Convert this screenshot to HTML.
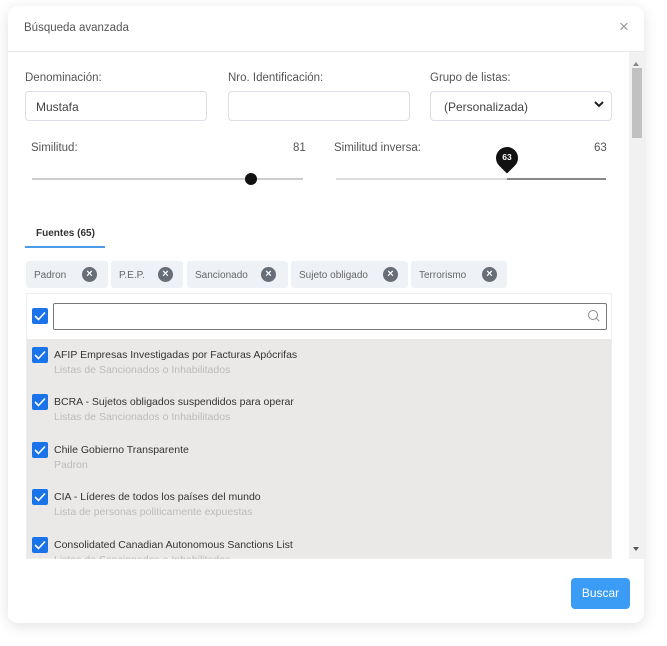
<!DOCTYPE html>
<html><head><meta charset="utf-8"><style>
*{box-sizing:border-box;margin:0;padding:0}
body{width:667px;height:646px;background:#fff;font-family:"Liberation Sans",sans-serif;position:relative;overflow:hidden}
.a{position:absolute}
.modal{left:8px;top:6px;width:636px;height:617px;background:#fff;border-radius:10px;box-shadow:0 3px 14px rgba(0,0,0,.12);overflow:hidden}
.lbl{font-size:11.5px;color:#555}
.inp{border:1px solid #dcdfe6;border-radius:4px;height:30px;background:#fff;font-size:12px;color:#444;padding:8px 10px}
.chip{top:261px;height:27px;background:#eef1f5;border-radius:3px;font-size:10px;color:#666;padding:9px 8px}
.x{position:absolute;top:6px;width:15px;height:15px;border-radius:50%;background:#666e78;color:#fff;font-size:11px;line-height:15px;text-align:center;font-weight:bold}
.cb{width:16px;height:16px;background:#1a73e8;border-radius:2px}
.cb svg{display:block}
.t{font-size:10.5px;color:#333}
.s{font-size:10.5px;color:#bbb}
</style></head><body>
<div class="a modal">
 <div class="a" style="left:16px;top:16px;font-size:11.5px;color:#555">Búsqueda avanzada</div>
 <div class="a" style="left:611px;top:11px;font-size:17px;color:#999">×</div>
 <div class="a" style="left:0;top:45px;width:636px;height:1px;background:#e8e8e8"></div>
 <div class="a" style="left:621px;top:46px;width:15px;height:507px;background:#f1f1f1"></div>
 <div class="a" style="left:624px;top:62px;width:10px;height:70px;background:#c1c1c1"></div>
 <div class="a" style="left:625px;top:56px;width:0;height:0;border:3px solid transparent;border-bottom:4px solid #888;border-top:0"></div>
 <div class="a" style="left:625px;top:541px;width:0;height:0;border:3px solid transparent;border-top:4px solid #555;border-bottom:0"></div>
</div>
<div class="a lbl" style="left:25px;top:72px">Denominación:</div>
<div class="a lbl" style="left:228px;top:72px">Nro. Identificación:</div>
<div class="a lbl" style="left:430px;top:72px">Grupo de listas:</div>
<div class="a inp" style="left:25px;top:91px;width:182px">Mustafa</div>
<div class="a inp" style="left:228px;top:91px;width:182px"></div>
<div class="a inp" style="left:430px;top:91px;width:182px;padding-left:13px">(Personalizada)<span style="position:absolute;right:6px;top:6px"><svg width="12" height="12" viewBox="0 0 12 12"><path d="M2 4l4 4 4-4" stroke="#222" stroke-width="2" fill="none"/></svg></span></div>
<div class="a lbl" style="left:31px;top:142px">Similitud:</div>
<div class="a lbl" style="left:293px;top:142px">81</div>
<div class="a lbl" style="left:334px;top:142px">Similitud inversa:</div>
<div class="a lbl" style="left:594px;top:142px">63</div>
<div class="a" style="left:32px;top:178px;width:271px;height:2px;background:#ccc"></div>
<div class="a" style="left:245px;top:173px;width:12px;height:12px;border-radius:50%;background:#111"></div>
<div class="a" style="left:336px;top:178px;width:270px;height:2px;background:#ddd"></div>
<div class="a" style="left:507px;top:178px;width:99px;height:2px;background:#888"></div>
<div class="a" style="left:496px;top:147px;width:22px;height:22px;border-radius:50% 50% 50% 0;transform:rotate(-45deg);background:#111"></div>
<div class="a" style="left:496px;top:152px;width:22px;text-align:center;color:#fff;font-size:8.5px;font-weight:bold">63</div>
<div class="a" style="left:36px;top:228px;font-size:10px;color:#333;font-weight:bold">Fuentes (65)</div>
<div class="a" style="left:25px;top:246px;width:80px;height:2px;background:#4a9be8"></div>
<div class="a chip" style="left:26px;width:82px">Padron<span class="x" style="left:56px">×</span></div>
<div class="a chip" style="left:111px;width:72px">P.E.P.<span class="x" style="left:47px">×</span></div>
<div class="a chip" style="left:187px;width:101px">Sancionado<span class="x" style="left:74px">×</span></div>
<div class="a chip" style="left:291px;width:117px">Sujeto obligado<span class="x" style="left:92px">×</span></div>
<div class="a chip" style="left:411px;width:96px">Terrorismo<span class="x" style="left:71px">×</span></div>
<div class="a" style="left:26px;top:293px;width:586px;height:266px;border:1px solid #eee;background:#ebe9e8;overflow:hidden">
 <div class="a" style="left:0;top:0;width:586px;height:45px;background:#fff"></div>
 <div class="a cb" style="left:5px;top:14px"><svg width="16" height="16"><path d="M3 8l3.5 3.5L13 4.5" stroke="#fff" stroke-width="1.6" fill="none"/></svg></div>
 <div class="a" style="left:26px;top:9px;width:554px;height:27px;border:1.5px solid #777;border-radius:2px;background:#fff"><svg class="a" style="right:5px;top:5px" width="14" height="14"><circle cx="6" cy="6" r="4.5" stroke="#888" fill="none"/><path d="M9.3 9.3l3 3" stroke="#888"/></svg></div>
</div>
<div class="a cb" style="left:32px;top:347px"><svg width="16" height="16"><path d="M3 8l3.5 3.5L13 4.5" stroke="#fff" stroke-width="1.6" fill="none"/></svg></div>
<div class="a t" style="left:54px;top:349px">AFIP Empresas Investigadas por Facturas Apócrifas</div>
<div class="a s" style="left:54px;top:364px">Listas de Sancionados o Inhabilitados</div>
<div class="a cb" style="left:32px;top:394px"><svg width="16" height="16"><path d="M3 8l3.5 3.5L13 4.5" stroke="#fff" stroke-width="1.6" fill="none"/></svg></div>
<div class="a t" style="left:54px;top:396px">BCRA - Sujetos obligados suspendidos para operar</div>
<div class="a s" style="left:54px;top:411px">Listas de Sancionados o Inhabilitados</div>
<div class="a cb" style="left:32px;top:442px"><svg width="16" height="16"><path d="M3 8l3.5 3.5L13 4.5" stroke="#fff" stroke-width="1.6" fill="none"/></svg></div>
<div class="a t" style="left:54px;top:444px">Chile Gobierno Transparente</div>
<div class="a s" style="left:54px;top:459px">Padron</div>
<div class="a cb" style="left:32px;top:489px"><svg width="16" height="16"><path d="M3 8l3.5 3.5L13 4.5" stroke="#fff" stroke-width="1.6" fill="none"/></svg></div>
<div class="a t" style="left:54px;top:491px">CIA - Líderes de todos los países del mundo</div>
<div class="a s" style="left:54px;top:506px">Lista de personas politicamente expuestas</div>
<div class="a cb" style="left:32px;top:537px"><svg width="16" height="16"><path d="M3 8l3.5 3.5L13 4.5" stroke="#fff" stroke-width="1.6" fill="none"/></svg></div>
<div class="a t" style="left:54px;top:539px">Consolidated Canadian Autonomous Sanctions List</div>
<div class="a s" style="left:54px;top:554px">Listas de Sancionados o Inhabilitados</div>
<div class="a" style="left:8px;top:559px;width:622px;height:60px;background:#fff"></div>
<div class="a" style="left:571px;top:578px;width:59px;height:31px;background:#3b9cf6;border-radius:4px;color:#fff;font-size:12px;text-align:center;line-height:31px">Buscar</div>
</body></html>
